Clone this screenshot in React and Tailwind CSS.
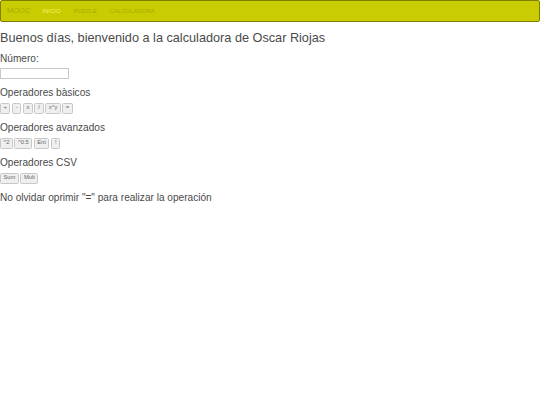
const FONT = "font-['Liberation_Sans',Arial,sans-serif]"

function OpButton({ label }) {
    return (
        <button className="h-[11.5px] min-w-[9.5px] px-[2.5px] border border-[#c8c8c8] rounded-[1.5px] bg-[#efefef] text-[5.8px] font-light leading-none text-[#666666]">
            {label}
        </button>
    )
}

function OpGroup({ title, ops }) {
    return (
        <div className="mt-[7px]">
            <h3 className="text-[10.1px] leading-[14px] text-[#4a4a4a]">{title}</h3>
            <div className="mt-[2.5px] flex gap-[1.5px]">
                {ops.map((op) => (
                    <OpButton key={op} label={op} />
                ))}
            </div>
        </div>
    )
}

export default function App() {
    return (
        <div className={`${FONT} bg-white min-h-[405px] text-[#4a4a4a]`}>
            <nav className="h-[22px] bg-[#c8cc00] border border-[#808000] rounded-[2px] flex items-center pl-[6px] text-[6px] text-[#a9ad00]">
                <span className="text-[7.5px] mr-[12px]">MOOC</span>
                <span className="text-[#f2f56b] mr-[13px]">INICIO</span>
                <span className="mr-[13px]">PUZZLE</span>
                <span>CALCULADORA</span>
            </nav>
            <h1 className="mt-[9px] text-[12.7px] leading-[15px]">
                Buenos días, bienvenido a la calculadora de Oscar Riojas
            </h1>
            <div className="mt-[6px]">
                <label className="block text-[10.1px] leading-[14px]">Número:</label>
                <input
                    type="text"
                    className="block mt-[2px] w-[69px] h-[11px] border border-[#c8c8c8] bg-white"
                />
            </div>
            <OpGroup title="Operadores bàsicos" ops={["+", "-", "x", "/", "x^y", "="]} />
            <OpGroup title="Operadores avanzados" ops={["^2", "^0.5", "Ent", "!"]} />
            <OpGroup title="Operadores CSV" ops={["Sum", "Mult"]} />
            <p className="mt-[7px] text-[10.1px] leading-[14px]">
                No olvidar oprimir "=" para realizar la operación
            </p>
        </div>
    )
}
